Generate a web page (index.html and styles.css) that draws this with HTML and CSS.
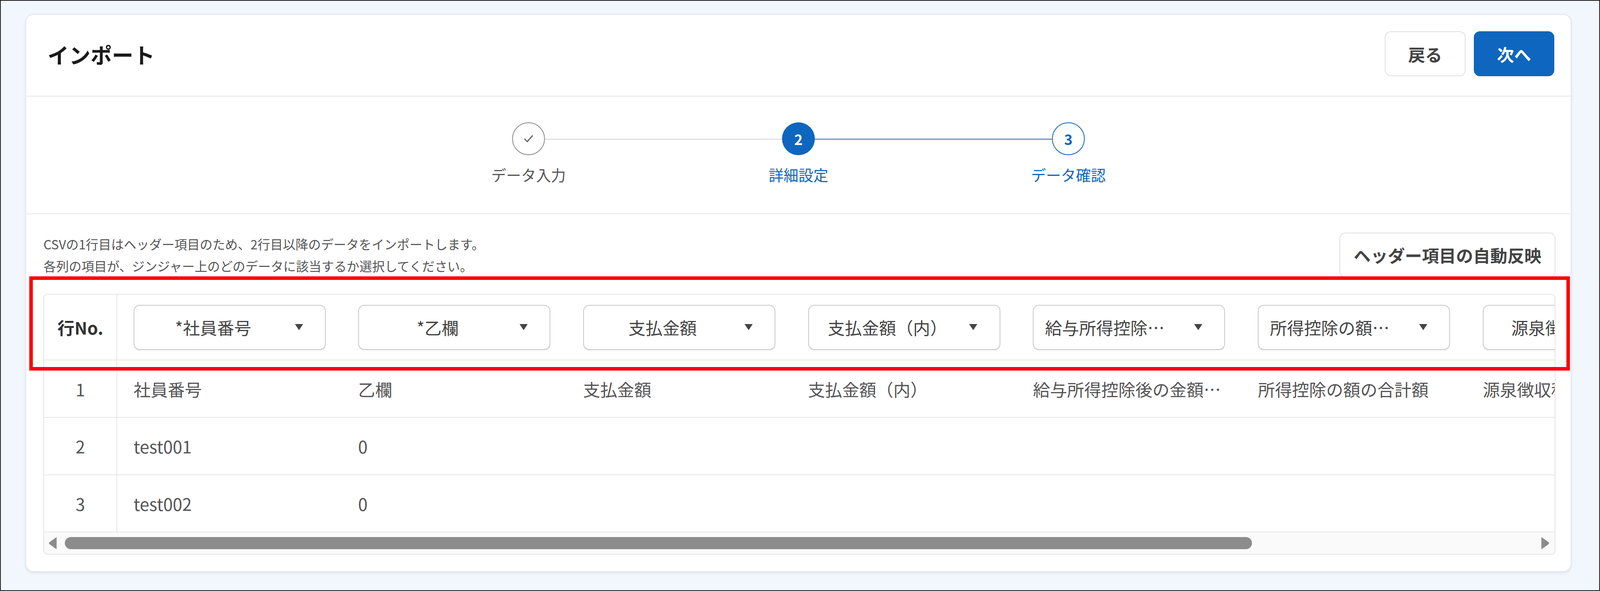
FILE: index.html
```html
<!DOCTYPE html>
<html lang="ja">
  <head>
    <meta charset="utf-8" />
    <title>インポート</title>
    <link rel="stylesheet" href="styles.css">
  </head>

  <body>
    <div class="screen">
      <div class="card">
        <!-- header -->
        <div class="card-header">
          <h1 class="page-title">インポート</h1>
          <div class="header-actions">
            <button type="button" class="btn">戻る</button>
            <button type="button" class="btn btn-primary">次へ</button>
          </div>
        </div>

        <!-- stepper -->
        <div class="steps">
          <div class="step done">
            <span class="step-circle">
              <svg width="10" height="8" viewBox="0 0 10 8">
                <polyline points="1,4.2 3.8,7 9,1" fill="none" stroke="#666" stroke-width="1.2" />
              </svg>
            </span>
            <span class="step-label">データ入力</span>
          </div>
          <div class="step current">
            <span class="step-circle">2</span>
            <span class="step-label">詳細設定</span>
          </div>
          <div class="step next">
            <span class="step-circle">3</span>
            <span class="step-label">データ確認</span>
          </div>
        </div>

        <div class="card-body">
          <div class="intro">
            <p class="intro-text">
              CSVの1行目はヘッダー項目のため、2行目以降のデータをインポートします。<br />
              各列の項目が、ジンジャー上のどのデータに該当するか選択してください。
            </p>
            <button type="button" class="btn btn-auto">ヘッダー項目の自動反映</button>
          </div>

          <div class="mapping">
            <div class="grid-wrap">
              <table class="grid">
                <colgroup>
                  <col class="col-no" />
                  <col class="col-data" />
                  <col class="col-data" />
                  <col class="col-data" />
                  <col class="col-data" />
                  <col class="col-data" />
                  <col class="col-data" />
                  <col class="col-data" />
                </colgroup>
                <thead>
                  <tr>
                    <th class="cell-no">行No.</th>
                    <th><div class="select"><span class="select-text">*社員番号</span><svg width="8" height="6" viewBox="0 0 8 6"><polygon points="0,0 8,0 4,6" fill="#444" /></svg></div></th>
                    <th><div class="select"><span class="select-text">*乙欄</span><svg width="8" height="6" viewBox="0 0 8 6"><polygon points="0,0 8,0 4,6" fill="#444" /></svg></div></th>
                    <th><div class="select"><span class="select-text">支払金額</span><svg width="8" height="6" viewBox="0 0 8 6"><polygon points="0,0 8,0 4,6" fill="#444" /></svg></div></th>
                    <th><div class="select"><span class="select-text">支払金額（内）</span><svg width="8" height="6" viewBox="0 0 8 6"><polygon points="0,0 8,0 4,6" fill="#444" /></svg></div></th>
                    <th><div class="select"><span class="select-text">給与所得控除後の金額</span><svg width="8" height="6" viewBox="0 0 8 6"><polygon points="0,0 8,0 4,6" fill="#444" /></svg></div></th>
                    <th><div class="select"><span class="select-text">所得控除の額の合計額</span><svg width="8" height="6" viewBox="0 0 8 6"><polygon points="0,0 8,0 4,6" fill="#444" /></svg></div></th>
                    <th><div class="select"><span class="select-text">源泉徴収税額</span><svg width="8" height="6" viewBox="0 0 8 6"><polygon points="0,0 8,0 4,6" fill="#444" /></svg></div></th>
                  </tr>
                </thead>
                <tbody>
                  <tr>
                    <td class="cell-no">1</td>
                    <td>社員番号</td>
                    <td>乙欄</td>
                    <td>支払金額</td>
                    <td>支払金額（内）</td>
                    <td>給与所得控除後の金額（調整控除後）</td>
                    <td>所得控除の額の合計額</td>
                    <td>源泉徴収税額</td>
                  </tr>
                  <tr>
                    <td class="cell-no">2</td>
                    <td>test001</td>
                    <td>0</td>
                    <td></td>
                    <td></td>
                    <td></td>
                    <td></td>
                    <td></td>
                  </tr>
                  <tr>
                    <td class="cell-no">3</td>
                    <td>test002</td>
                    <td>0</td>
                    <td></td>
                    <td></td>
                    <td></td>
                    <td></td>
                    <td></td>
                  </tr>
                </tbody>
              </table>

              <!-- horizontal scrollbar -->
              <div class="hscroll">
                <svg width="8" height="12" viewBox="0 0 8 12"><path d="M8 0 L8 12 L1 7 Q0 6 1 5 Z" fill="#8c8c8c" /></svg>
                <div class="thumb"></div>
                <svg class="arrow-right" width="8" height="12" viewBox="0 0 8 12"><path d="M0 0 L0 12 L7 7 Q8 6 7 5 Z" fill="#8c8c8c" /></svg>
              </div>
            </div>

            <!-- annotation -->
            <div class="highlight"></div>
          </div>
        </div>
      </div>
    </div>
  </body>
</html>
```

FILE: styles.css
```css
html {
  zoom: 2.6175;
}
body {
  margin: 0;
  font-family: "Noto Sans CJK JP", "Noto Sans", sans-serif;
  color: #333;
  background-color: #f2f6fd;
}
.screen {
  box-sizing: border-box;
  height: 577.6px;
  padding: 13px 27px 0 24px;
  border: 1px solid #1a1a1a;
  background-color: #f2f6fd;
}
.card {
  background-color: #fff;
  border: 1px solid #e3e7ee;
  border-radius: 8px;
  box-shadow: 0 1px 3px rgba(0, 0, 0, 0.08);
}

/* header */
.card-header {
  display: flex;
  align-items: center;
  justify-content: space-between;
  height: 80px;
  padding: 0 16px 3px 21px;
  box-sizing: border-box;
  border-bottom: 1px solid #e6e6e6;
}
.page-title {
  margin: 0;
  font-size: 21px;
  font-weight: 700;
  color: #1a1a1a;
}
.header-actions {
  display: flex;
  gap: 8px;
}
.btn {
  box-sizing: border-box;
  height: 44px;
  padding: 0 13px;
  font-family: inherit;
  font-size: 16.7px;
  font-weight: 700;
  color: #444;
  background-color: #fff;
  border: 1px solid #e0e0e0;
  border-radius: 6px;
}
.header-actions .btn {
  width: 79px;
}
.btn-primary {
  color: #fff;
  background-color: #0f66be;
  border-color: #0f66be;
}

/* stepper */
.steps {
  display: flex;
  justify-content: center;
  padding: 25px 0 27px;
  border-bottom: 1px solid #e6e6e6;
}
.step {
  position: relative;
  width: 264px;
  display: flex;
  flex-direction: column;
  align-items: center;
  gap: 9px;
}
.step::after {
  content: "";
  position: absolute;
  top: 16px;
  left: 50%;
  width: 100%;
  height: 1px;
  background-color: #d4d4d4;
}
.step.current::after {
  background-color: #1a6bc4;
}
.step:last-child::after {
  display: none;
}
.step-circle {
  position: relative;
  z-index: 1;
  box-sizing: border-box;
  width: 32px;
  height: 32px;
  border-radius: 50%;
  display: flex;
  align-items: center;
  justify-content: center;
  font-size: 14px;
  font-weight: 700;
  background-color: #fff;
}
.step.done .step-circle {
  border: 1px solid #8a8a8a;
}
.step.current .step-circle {
  color: #fff;
  background-color: #0f66be;
}
.step.next .step-circle {
  color: #0f66be;
  border: 1px solid #0f66be;
}
.step-label {
  font-size: 14.6px;
  line-height: 21px;
  color: #0f66be;
}
.step.done .step-label {
  color: #555;
}

/* body */
.card-body {
  padding: 18px 15px 16px 17px;
}
.intro {
  display: flex;
  align-items: center;
  justify-content: space-between;
}
.intro-text {
  margin: 0;
  font-size: 12.4px;
  line-height: 21.5px;
  color: #555;
}
.mapping {
  position: relative;
  margin-top: 16px;
}
.grid-wrap {
  border: 1px solid #e3e3e3;
  border-radius: 4px;
  overflow: hidden;
}
.grid {
  table-layout: fixed;
  border-collapse: collapse;
  width: 1611px;
}
.col-no {
  width: 71px;
}
.col-data {
  width: 220px;
}
.grid th,
.grid td {
  padding: 0 18px 0 16px;
  border-bottom: 1px solid #e6e6e6;
  font-size: 16.7px;
  white-space: nowrap;
  overflow: hidden;
  text-overflow: ellipsis;
  text-align: left;
}
.grid thead tr {
  height: 64px;
}
.grid tbody tr {
  height: 56px;
}
.grid td {
  color: #555;
}
.grid .cell-no {
  padding: 0;
  text-align: center;
  border-right: 1px solid #e6e6e6;
}
.grid th.cell-no {
  font-weight: 700;
  color: #333;
}
.select {
  box-sizing: border-box;
  display: flex;
  align-items: center;
  width: 188px;
  height: 44px;
  padding: 0 21px 0 11px;
  border: 1px solid #c9c9c9;
  border-radius: 6px;
  box-shadow: 0 1px 0 rgba(0, 0, 0, 0.06);
  background-color: #fff;
  font-weight: 400;
  color: #444;
}
.select-text {
  flex: none;
  width: 132px;
  text-align: center;
  white-space: nowrap;
  overflow: hidden;
  text-overflow: ellipsis;
}
.select svg {
  flex: none;
  margin-left: 14px;
}

/* scrollbar */
.hscroll {
  display: flex;
  align-items: center;
  height: 21px;
  padding: 0 5px 0 4px;
  background-color: #fafafa;
}
.thumb {
  width: 1161px;
  height: 12px;
  margin-left: 8px;
  border-radius: 6px;
  background-color: #8c8c8c;
}
.arrow-right {
  margin-left: auto;
}

/* red annotation frame */
.highlight {
  position: absolute;
  top: -17px;
  left: -14px;
  right: -14px;
  height: 92px;
  box-sizing: border-box;
  border: 3.7px solid #ff0000;
  pointer-events: none;
}
```
